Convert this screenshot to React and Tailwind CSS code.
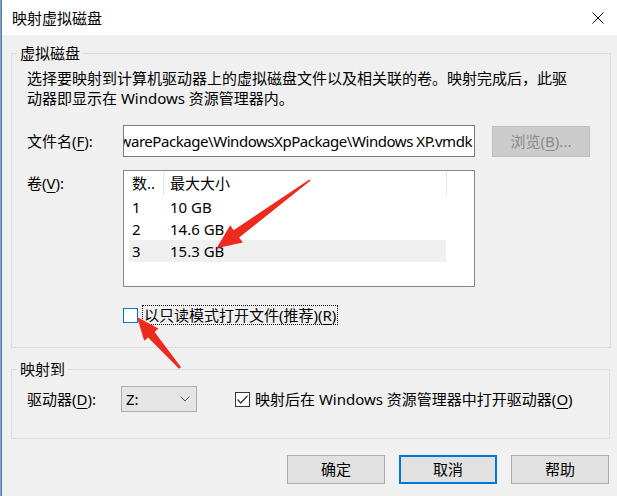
import React from "react";

const FONT = { fontFamily: '"Noto Sans", "Noto Sans CJK SC", sans-serif' };

function U({ children }) {
  return <span className="underline underline-offset-[3px] decoration-[1px]">{children}</span>;
}

function Arrows() {
  return (
    <svg className="absolute inset-0 pointer-events-none" width="617" height="496" viewBox="0 0 617 496">
      <polygon
        fill="#ee2a1e"
        points="310.6,180.6 239.2,237.4 242.8,242.4 216.5,248.2 230.2,225.2 233.6,230.2 309.4,179.4"
      />
      <polygon
        fill="#ee2a1e"
        points="181.0,367.3 154.6,332.0 158.4,328.6 137,317 144.2,340.8 148.2,337.6 179.0,368.8"
      />
    </svg>
  );
}

export default function App() {
  return (
    <div className="relative w-[617px] h-[496px] flex bg-[#f0f0f0] text-black text-[15px] overflow-hidden" style={FONT}>
      <div className="w-[1px] bg-[#9a9a9a]" />
      <div className="w-[1px] bg-[#3a87d6]" />
      <div className="flex-1 flex flex-col">
        {/* Title bar */}
        <div className="h-[35px] bg-white flex items-center justify-between pl-[10px] pr-[13px]">
          <span className="leading-[20px]">映射虚拟磁盘</span>
          <svg width="12" height="12" viewBox="0 0 12 12">
            <path d="M0.5 0.5 L11.5 11.5 M11.5 0.5 L0.5 11.5" stroke="#000" strokeWidth="1" />
          </svg>
        </div>

        {/* Group 1 */}
        <fieldset className="mt-[8px] ml-[9px] mr-[6px] border border-[#dcdcdc]">
          <legend className="ml-[5px] px-[3px] leading-[20px]">虚拟磁盘</legend>
          <div className="pl-[15px] pt-[5px] pb-[22px]">
            <div className="leading-[20px]">
              <div>选择要映射到计算机驱动器上的虚拟磁盘文件以及相关联的卷。映射完成后，此驱</div>
              <div>动器即显示在 Windows 资源管理器内。</div>
            </div>
            <div className="mt-[17px] h-[32px] flex items-center">
              <div className="w-[96px]">文件名(<U>F</U>):</div>
              <div className="w-[352px] h-[32px] border border-[#7a7a7a] bg-white flex items-center justify-end overflow-hidden pr-[2px] whitespace-nowrap">
                <span className="tracking-[-0.45px]">D:\VMwarePackage\WindowsXpPackage\Windows XP.vmdk</span>
              </div>
              <div className="ml-[17px] w-[98px] h-[31px] bg-[#cccccc] border border-[#bfbfbf] flex items-center justify-center text-[#8a8a8a]">
                浏览(<U>B</U>)...
              </div>
            </div>
            <div className="mt-[13px] flex">
              <div className="w-[96px] pt-[3px] leading-[20px]">卷(<U>V</U>):</div>
              <div className="w-[352px] h-[117px] border border-[#828790] bg-white">
                <div className="h-[25px] flex items-center ml-[5px]">
                  <div className="w-[34px] pl-[3px]">数..</div>
                  <div className="w-px h-[23px] bg-[#e5e5e5]" />
                  <div className="w-[282px] pl-[6px]">最大大小</div>
                  <div className="w-px h-[23px] bg-[#e5e5e5]" />
                </div>
                {[
                  ["1", "10 GB"],
                  ["2", "14.6 GB"],
                  ["3", "15.3 GB"],
                ].map(([n, s], i) => (
                  <div
                    key={n}
                    className={
                      "ml-[5px] w-[317px] h-[22px] flex items-center " + (i === 2 ? "bg-[#f0f0f0]" : "")
                    }
                  >
                    <div className="w-[41px] pl-[3px]">{n}</div>
                    <div>{s}</div>
                  </div>
                ))}
              </div>
            </div>
            <div className="mt-[18px] h-[20px] flex items-center pl-[96px]">
              <div className="w-[15px] h-[15px] border border-[#0078d7] bg-white" />
              <div className="ml-[4px] h-[20px] px-[1px] border border-dotted border-black flex items-center leading-[18px]">
                以只读模式打开文件(推荐)(<U>R</U>)
              </div>
            </div>
          </div>
        </fieldset>

        {/* Group 2 */}
        <fieldset className="mt-[11px] ml-[9px] mr-[7px] border border-[#dcdcdc]">
          <legend className="ml-[5px] px-[3px] leading-[20px]">映射到</legend>
          <div className="pl-[15px] pt-[7px] pb-[26px]">
            <div className="h-[26px] flex items-center">
              <div className="w-[94px]">驱动器(<U>D</U>):</div>
              <div className="w-[76px] h-[26px] bg-[#e5e5e5] border border-[#adadad] flex items-center justify-between pl-[4px] pr-[6px]">
                <span>Z:</span>
                <svg width="10" height="6" viewBox="0 0 10 6">
                  <polyline points="0.5,0.5 5,5 9.5,0.5" fill="none" stroke="#555" strokeWidth="1" />
                </svg>
              </div>
              <div className="ml-[38px] w-[15px] h-[15px] border border-[#333] bg-white flex items-center justify-center">
                <svg width="11" height="9" viewBox="0 0 11 9">
                  <polyline points="0.5,4.5 3.8,8 10.5,0.8" fill="none" stroke="#333" strokeWidth="1.3" />
                </svg>
              </div>
              <div className="ml-[5px]">映射后在 Windows 资源管理器中打开驱动器(<U>O</U>)</div>
            </div>
          </div>
        </fieldset>

        {/* Buttons */}
        <div className="mt-[16px] flex justify-end gap-[14px] pr-[8px]">
          <div className="w-[98px] h-[29px] bg-[#e1e1e1] border border-[#adadad] flex items-center justify-center">确定</div>
          <div className="w-[98px] h-[29px] bg-[#e1e1e1] border-2 border-[#0078d7] flex items-center justify-center">取消</div>
          <div className="w-[98px] h-[29px] bg-[#e1e1e1] border border-[#adadad] flex items-center justify-center">帮助</div>
        </div>
      </div>
      <Arrows />
    </div>
  );
}
